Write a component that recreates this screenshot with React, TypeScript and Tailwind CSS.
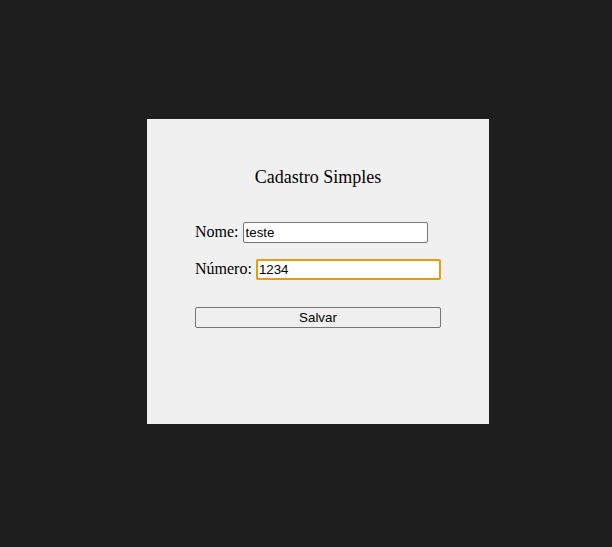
export default function App() {
  return (
    <div className="min-h-[547px] bg-[#1e1e1e] pl-[147px] pt-[119px]">
      <div className="h-[305px] w-[342px] bg-[#f0f0f0] px-12 pt-[46px] font-['Liberation_Serif',serif] text-black">
        <h2 className="text-center text-[18px] leading-[24px]">Cadastro Simples</h2>
        <form className="mt-[33px]" onSubmit={(e) => e.preventDefault()}>
          <div className="flex h-[21px] items-center text-[16px]">
            <label htmlFor="nome" className="-mt-px">Nome:</label>
            <input
              id="nome"
              defaultValue="teste"
              className="ml-1 h-[21px] w-[185px] rounded-[2px] border border-[#767676] bg-white px-[2px] font-['Liberation_Sans',sans-serif] text-[13.33px] outline-none"
            />
          </div>
          <div className="mt-4 flex h-[21px] items-center text-[16px]">
            <label htmlFor="numero" className="-mt-px">Número:</label>
            <input
              id="numero"
              defaultValue="1234"
              className="ml-1 h-[21px] w-[185px] rounded-[2px] border-2 border-[#e89c0c] bg-white px-[1px] font-['Liberation_Sans',sans-serif] text-[13.33px] outline-none"
            />
          </div>
          <button
            type="submit"
            className="mt-[27px] h-[21px] w-[246px] rounded-[2px] border border-[#767676] bg-[#efefef] font-['Liberation_Sans',sans-serif] text-[13.33px] leading-none"
          >
            Salvar
          </button>
        </form>
      </div>
    </div>
  );
}
